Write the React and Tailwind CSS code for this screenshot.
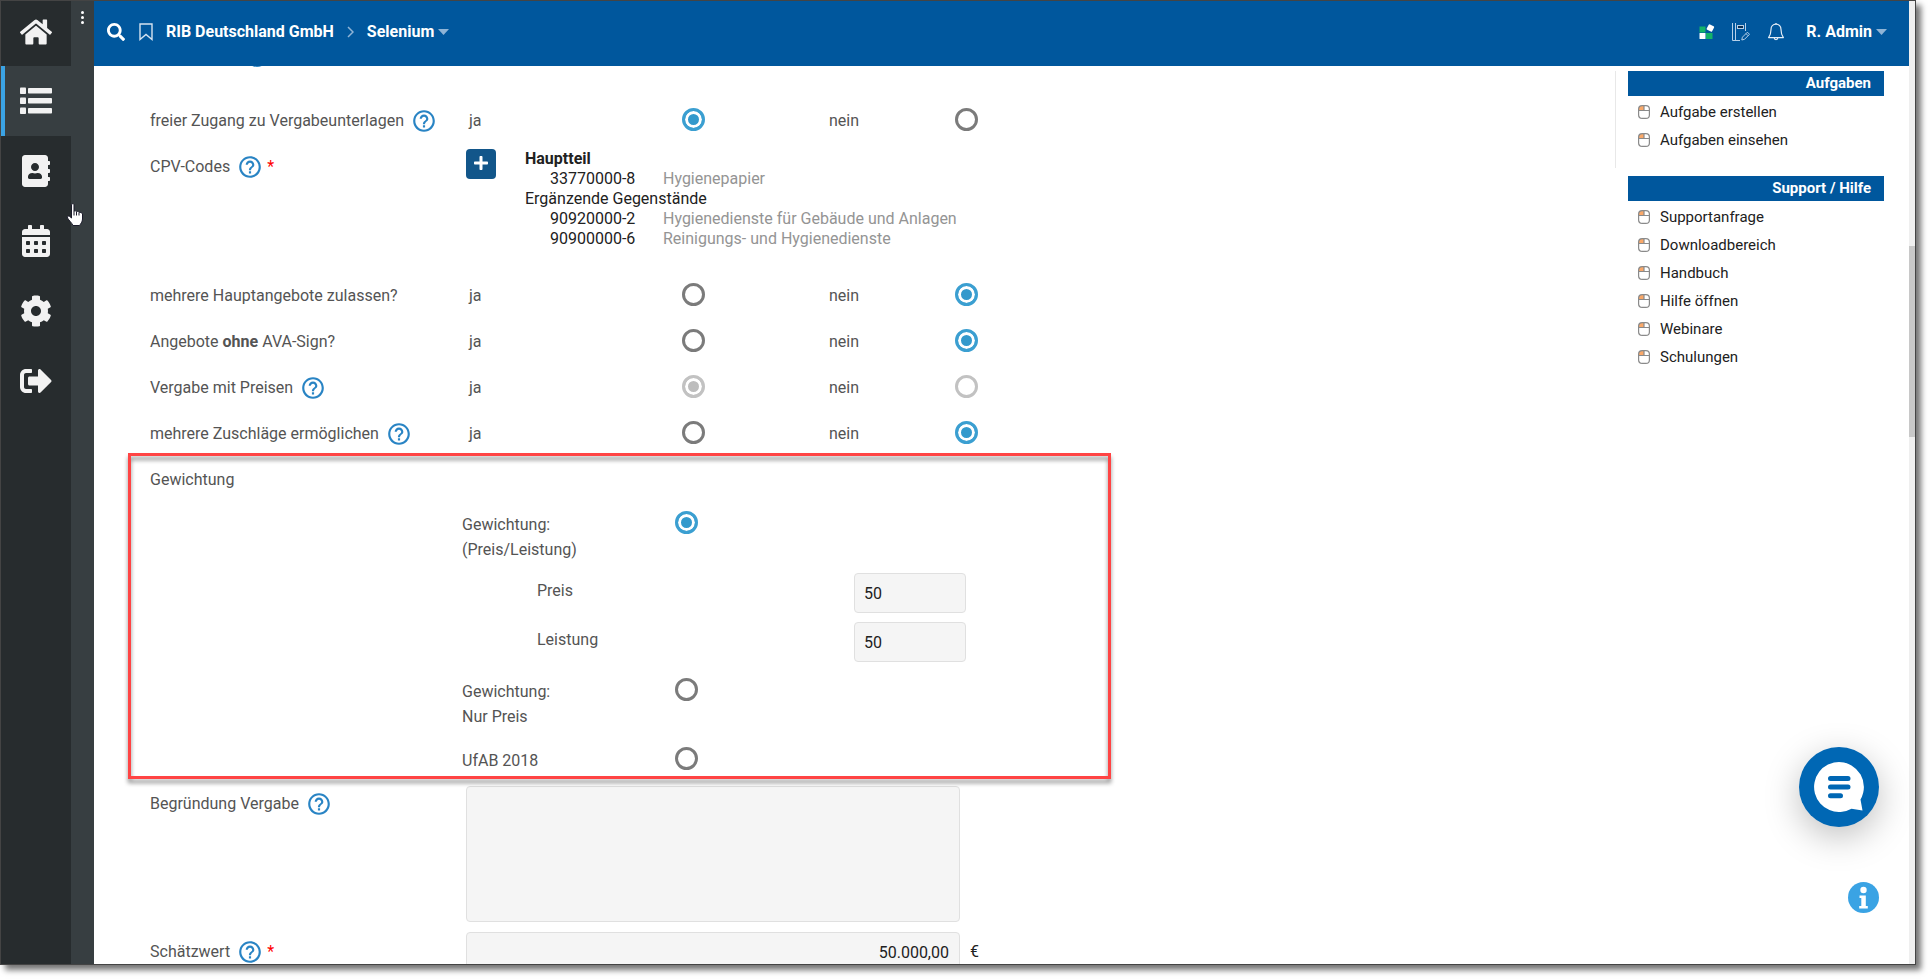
import React, { useState } from 'react'
import {
    FaHome,
    FaAddressBook,
    FaCalendarAlt,
    FaCog,
    FaSignOutAlt,
    FaSearch,
    FaPlus,
} from 'react-icons/fa'
import { MdHelpOutline } from 'react-icons/md'
import { clsx } from 'clsx'

const ListIcon = ({ size }) => (
    <svg width={size} height={size} viewBox="0 0 32 32" fill="currentColor">
        <rect x="0" y="2.500" width="6" height="6.500" rx="0.800" />
        <rect x="0" y="12.500" width="6" height="6.500" rx="0.800" />
        <rect x="0" y="22.500" width="6" height="6.500" rx="0.800" />
        <rect x="8" y="3" width="24" height="5.500" rx="0.800" />
        <rect x="8" y="13" width="24" height="5.500" rx="0.800" />
        <rect x="8" y="23" width="24" height="5.500" rx="0.800" />
    </svg>
)

const NAV_ITEMS = [
    { label: 'Liste', icon: ListIcon, active: true },
    { label: 'Kontakte', icon: FaAddressBook },
    { label: 'Kalender', icon: FaCalendarAlt },
    { label: 'Einstellungen', icon: FaCog },
    { label: 'Abmelden', icon: FaSignOutAlt },
]

const CPV_CODES = [
    { title: 'Hauptteil', bold: true, codes: [['33770000-8', 'Hygienepapier']] },
    {
        title: 'Ergänzende Gegenstände',
        codes: [
            ['90920000-2', 'Hygienedienste für Gebäude und Anlagen'],
            ['90900000-6', 'Reinigungs- und Hygienedienste'],
        ],
    },
]

const TASK_LINKS = ['Aufgabe erstellen', 'Aufgaben einsehen']
const SUPPORT_LINKS = ['Supportanfrage', 'Downloadbereich', 'Handbuch', 'Hilfe öffnen', 'Webinare', 'Schulungen']

const BookmarkIcon = () => (
    <svg width="14" height="18" viewBox="0 0 14 18" fill="none" stroke="#d5e3f0" strokeWidth="1.4">
        <path d="M1 1h12v15.5l-6-5-6 5z" />
    </svg>
)

const CaretIcon = () => (
    <svg width="11" height="6" viewBox="0 0 11 6" fill="#8fb4d6">
        <path d="M0 0h11L5.500 6z" />
    </svg>
)

const AppsIcon = () => (
    <svg width="16" height="16" viewBox="0 0 16 16">
        <rect x="0.5" y="2.5" width="6" height="6" fill="#14b369" />
        <rect x="0.5" y="9" width="6" height="6" rx="0.5" fill="#fff" />
        <rect x="7" y="9" width="6.500" height="6" fill="#14b369" />
        <rect x="8.4" y="1" width="6" height="6" rx="1" fill="#fff" transform="rotate(28 11.4 4)" />
    </svg>
)

const NotebookIcon = () => (
    <svg width="18" height="18" viewBox="0 0 18 18" fill="none" stroke="#b7d0e8" strokeWidth="1">
        <path d="M0.5 0v17.5M3.5 0v17.5M0.5 17.5H8M13.5 0v8" />
        <rect x="5.5" y="2.500" width="6" height="3" fill="#0c2f52" />
        <path d="M9.8 17l.6-2.8 5-5 2.1 2.1-5 5zM14 10.600l2.100 2.100" />
    </svg>
)

const BellIcon = () => (
    <svg width="16" height="18" viewBox="0 0 16 18" fill="none" stroke="#e4edf6" strokeWidth="1.2">
        <path d="M8 1.200C5 1.200 3 3.400 3 6.400c0 4.200-.8 6-2.400 8.200h14.800C13.800 12.400 13 10.600 13 6.400c0-3-2-5.200-5-5.200z" strokeLinejoin="round" />
        <path d="M6.200 14.800a1.800 1.800 0 0 0 3.600 0M8 0v1.200" />
    </svg>
)

const MouseIcon = () => (
    <svg width="12" height="14" viewBox="0 0 12 14" fill="none" stroke="#8a8a8a" strokeWidth="1.200">
        <path d="M1 1h5v4.500H1z" fill="#f9a869" stroke="none" />
        <rect x="0.6" y="0.600" width="10.800" height="12.800" rx="3.500" />
        <path d="M0.600 5.500h10.800M6 0.600v4.900" />
    </svg>
)

const ChatIcon = () => (
    <svg width="50" height="50" viewBox="0 0 50 50">
        <path d="M25 0a25 25 0 1 0 12.500 46.700L48.500 48.600l-2-11A25 25 0 0 0 25 0z" fill="#fff" />
        <path d="M16.500 16.500h17.500M16.500 25h17.500M16.500 33.700h10" stroke="#0067b4" strokeWidth="5" strokeLinecap="round" />
    </svg>
)

const InfoIcon = () => (
    <svg width="31" height="31" viewBox="0 0 31 31">
        <circle cx="15.500" cy="15.500" r="15.500" fill="#3aa3e4" />
        <circle cx="15.500" cy="8" r="3.200" fill="#fff" />
        <path d="M11.500 13.500h6.300v10.500h2v2.500h-8.600V24h2.100v-8h-1.800z" fill="#fff" />
    </svg>
)

const HandPointer = () => (
    <svg className="absolute left-[65px] top-[201px] z-20" width="18" height="25" viewBox="0 0 18 25">
        <path
            d="M5.500 2.500C5.500 1.500 8 1.500 8 2.500V9.500C8 8.500 10.500 8.700 10.500 9.700C10.800 9 13 9.300 13 10.500C13.500 10 16.500 10.500 16.500 12v5c0 3-2 5-3 6.500H7C5.500 20.500 3 18.500 1.500 16C.700 14.500 2.500 13.300 3.800 14.500L5.500 16z"
            fill="#fff"
            stroke="#1b1b2b"
            strokeWidth="1"
        />
        <path d="M8 9.500v4M10.500 10v3.500M13 11v2.500" stroke="#1b1b2b" strokeWidth="1" />
    </svg>
)

const Sidebar = () => (
    <nav className="flex shrink-0 bg-[#373e41] w-[93px]">
        <div className="w-[70px] bg-[#272c2e] text-[#f2f2f2]">
            <a href="#home" aria-label="Startseite" className="flex items-center justify-center h-[65px] pb-1">
                <FaHome size={32} />
            </a>
            {NAV_ITEMS.map(({ label, icon: Icon, active }) => (
                <a
                    key={label}
                    href={`#${label.toLowerCase()}`}
                    aria-label={label}
                    className={clsx(
                        'flex items-center justify-center h-[70px]',
                        active && 'bg-[#373e41] border-l-4 border-[#3ba3e4] pr-1'
                    )}
                >
                    <Icon size={32} />
                </a>
            ))}
        </div>
        <button aria-label="Menü" className="flex flex-col gap-[2px] self-start items-center w-[23px] pt-[10px]">
            <span className="size-[3px] rounded-full bg-white" />
            <span className="size-[3px] rounded-full bg-white" />
            <span className="size-[3px] rounded-full bg-white" />
        </button>
    </nav>
)

const Header = () => (
    <header className="flex items-center justify-between h-[65px] shrink-0 bg-[#00579d] text-white pl-[13px] pr-[22px] pb-[3px] font-bold">
        <div className="flex items-center">
            <button aria-label="Suchen" className="mr-[14px]"><FaSearch size={18} /></button>
            <button aria-label="Merken" className="mr-[13px]"><BookmarkIcon /></button>
            <a href="#rib">RIB Deutschland GmbH</a>
            <svg className="mx-[13px]" width="7" height="12" viewBox="0 0 7 12" fill="none" stroke="#8fb4d6" strokeWidth="1.5">
                <path d="M1 1l5 5-5 5" />
            </svg>
            <button className="flex items-center gap-1">
                Selenium
                <CaretIcon />
            </button>
        </div>
        <div className="flex items-center">
            <button aria-label="Anwendungen" className="mr-[17px]"><AppsIcon /></button>
            <button aria-label="Notizen" className="mr-[18px]"><NotebookIcon /></button>
            <button aria-label="Benachrichtigungen" className="mr-[22px]"><BellIcon /></button>
            <button className="flex items-center gap-1">
                R. Admin
                <CaretIcon />
            </button>
        </div>
    </header>
)

const HelpButton = () => (
    <button type="button" aria-label="Hilfe" className="ml-[7px] text-[#2984c4]">
        <MdHelpOutline size={26} />
    </button>
)

const Row = ({ label, help, required, htmlFor, className, labelClassName, children }) => (
    <div className={clsx('flex', className)}>
        <div className={clsx('flex items-start shrink-0 w-[316px]', labelClassName)}>
            {htmlFor ? <label htmlFor={htmlFor}>{label}</label> : <span>{label}</span>}
            {help && <HelpButton />}
            {required && <span className="ml-1 text-[#f00]">*</span>}
        </div>
        {children}
    </div>
)

const Radio = (props) => (
    <input
        type="radio"
        className="appearance-none shrink-0 size-[23px] rounded-full border-3 border-[#7b7b7b] bg-white checked:border-[#3b9fd1] checked:bg-[#3399cc] checked:shadow-[inset_0_0_0_3px_white] disabled:border-[#c2c2c2] checked:disabled:bg-[#bdbdbd] checked:disabled:border-[#c2c2c2]"
        {...props}
    />
)

const YesNoRow = ({ id, label, help, initial, disabled }) => {
    const [value, setValue] = useState(initial)

    return (
        <Row label={label} help={help} className="min-h-[46px]">
            <div className="grid grid-cols-[213px_147px_126px_auto] items-start pl-[3px]">
                <label htmlFor={`${id}-ja`}>ja</label>
                <Radio id={`${id}-ja`} name={id} checked={value === 'ja'} disabled={disabled} onChange={() => setValue('ja')} />
                <label htmlFor={`${id}-nein`}>nein</label>
                <Radio id={`${id}-nein`} name={id} checked={value === 'nein'} disabled={disabled} onChange={() => setValue('nein')} />
            </div>
        </Row>
    )
}

const CpvRow = () => (
    <Row label="CPV-Codes" help required className="min-h-[129px]">
        <button type="button" aria-label="CPV-Code hinzufügen" className="flex items-center justify-center -mt-[5px] size-[30px] rounded bg-[#12568a] text-white pb-[2px]">
            <FaPlus size={16} />
        </button>
        <div className="-mt-[5px] ml-[29px] leading-5 text-[#212121]">
            {CPV_CODES.map((group) => (
                <div key={group.title}>
                    <p className={clsx(group.bold && 'font-bold')}>{group.title}</p>
                    {group.codes.map(([code, name]) => (
                        <p key={code} className="flex pl-[25px]">
                            <span className="w-[113px]">{code}</span>
                            <span className="text-[#949494]">{name}</span>
                        </p>
                    ))}
                </div>
            ))}
        </div>
    </Row>
)

const fieldStyle = 'bg-[#f5f5f5] border border-[#e0e0e0] rounded-sm text-[#212121] outline-none'

const WeightField = ({ id, label, value, onChange }) => (
    <div className="flex items-start pl-[75px]">
        <label htmlFor={id} className="w-[317px] pt-[5px]">{label}</label>
        <input id={id} value={value} onChange={(e) => onChange(e.target.value)} className={clsx(fieldStyle, 'w-28 h-10 px-[9px]')} />
    </div>
)

const WeightOption = ({ id, value, onSelect, children }) => (
    <div className="flex items-start">
        <label htmlFor={id} className="w-[213px] pt-px">{children}</label>
        <Radio id={id} name="gewichtung" checked={value === id} onChange={() => onSelect(id)} />
    </div>
)

const WeightingSection = () => {
    const [mode, setMode] = useState('preis-leistung')
    const [price, setPrice] = useState('50')
    const [performance, setPerformance] = useState('50')

    return (
        <section className="relative min-h-[319px]">
            <h2>Gewichtung</h2>
            <div className="ml-[312px] pt-[19px]">
                <WeightOption id="preis-leistung" value={mode} onSelect={setMode}>
                    Gewichtung:<br />(Preis/Leistung)
                </WeightOption>
                <div className="flex flex-col gap-[9px] pt-[11px] pb-4">
                    <WeightField id="preis" label="Preis" value={price} onChange={setPrice} />
                    <WeightField id="leistung" label="Leistung" value={performance} onChange={setPerformance} />
                </div>
                <WeightOption id="nur-preis" value={mode} onSelect={setMode}>
                    Gewichtung:<br />Nur Preis
                </WeightOption>
                <div className="pt-[18px]">
                    <WeightOption id="ufab" value={mode} onSelect={setMode}>UfAB 2018</WeightOption>
                </div>
            </div>
            {/* highlight frame */}
            <div className="absolute -top-[14px] bottom-[7px] -left-[22px] w-[983px] border-3 border-[#ff4444] drop-shadow-[0_4px_2px_rgba(0,0,0,0.45)] pointer-events-none" />
        </section>
    )
}

const LinkBox = ({ title, links, className }) => (
    <div className={clsx('pl-3', className)}>
        <h2 className="bg-[#00579d] text-white text-right font-bold leading-[25px] pr-[13px] mb-[2px]">{title}</h2>
        <ul>
            {links.map((link) => (
                <li key={link}>
                    <a href="#link" className="flex items-center gap-[10px] h-7 pl-[10px]">
                        <MouseIcon />
                        {link}
                    </a>
                </li>
            ))}
        </ul>
    </div>
)

const App = () => {
    const [reason, setReason] = useState('')
    const [estimate, setEstimate] = useState('50.000,00')

    return (
        <div className="h-screen bg-white pr-[15px] pb-[15px] overflow-hidden font-[Roboto,sans-serif] text-base">
            <div className="relative flex h-full border border-[#444] bg-white shadow-[5px_5px_6px_rgba(0,0,0,0.55)]">
                <Sidebar />
                <HandPointer />
                <div className="flex flex-col flex-1 min-w-0">
                    <Header />
                    <div className="flex flex-1 min-h-0 overflow-hidden">
                        <main className="flex-1 min-w-0 pl-14 leading-[25px] text-[#545454]">
                            {/* row scrolled away under the header */}
                            <div className="flex items-end h-px mb-[41px] pl-24 overflow-hidden">
                                <div className="shrink-0 size-[22px] rounded-full border-2 border-[#2984c4]" />
                            </div>
                            <YesNoRow id="zugang" label="freier Zugang zu Vergabeunterlagen" help initial="ja" />
                            <CpvRow />
                            <YesNoRow id="hauptangebote" label="mehrere Hauptangebote zulassen?" initial="nein" />
                            <YesNoRow id="ava-sign" label={<span>Angebote <b>ohne</b> AVA-Sign?</span>} initial="nein" />
                            <YesNoRow id="preise" label="Vergabe mit Preisen" help initial="ja" disabled />
                            <YesNoRow id="zuschlaege" label="mehrere Zuschläge ermöglichen" help initial="nein" />
                            <WeightingSection />
                            <Row label="Begründung Vergabe" help htmlFor="begruendung" labelClassName="pt-[5px]" className="mb-[10px]">
                                <textarea
                                    id="begruendung"
                                    value={reason}
                                    onChange={(e) => setReason(e.target.value)}
                                    className={clsx(fieldStyle, 'block w-[494px] h-[136px] resize-none p-2')}
                                />
                            </Row>
                            <Row label="Schätzwert" help required htmlFor="schaetzwert" labelClassName="pt-[7px]">
                                <input
                                    id="schaetzwert"
                                    value={estimate}
                                    onChange={(e) => setEstimate(e.target.value)}
                                    className={clsx(fieldStyle, 'w-[494px] h-10 px-[10px] text-right')}
                                />
                                <span className="pl-[10px] pt-[7px] text-[#212121]">€</span>
                            </Row>
                        </main>
                        <aside className="w-[269px] mr-[25px] pt-[5px] shrink-0 text-[15px] text-[#212121]">
                            <LinkBox title="Aufgaben" links={TASK_LINKS} className="border-l border-[#e8e8e8] min-h-[97px] mb-2" />
                            <LinkBox title="Support / Hilfe" links={SUPPORT_LINKS} className="border-l border-transparent" />
                        </aside>
                    </div>
                </div>
                <div className="w-[6px] shrink-0 bg-[#efefef] pt-[245px]">
                    <div className="h-[191px] bg-[#c8c8c8]" />
                </div>
                <button aria-label="Chat" className="absolute right-9 bottom-[137px] flex items-center justify-center size-20 rounded-full bg-[#0067b4] shadow-[0_10px_35px_rgba(0,0,0,0.25)]">
                    <ChatIcon />
                </button>
                <button aria-label="Info" className="absolute right-9 bottom-[51px]">
                    <InfoIcon />
                </button>
            </div>
        </div>
    )
}

export default App
